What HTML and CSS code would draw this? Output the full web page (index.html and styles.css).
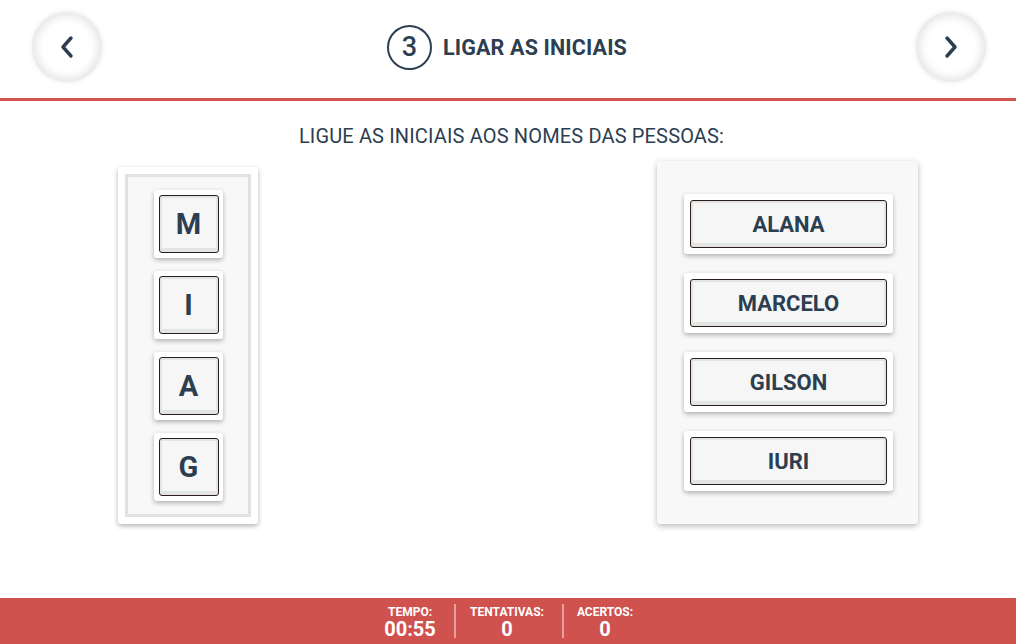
FILE: index.html
```html
<!DOCTYPE html>
<html lang="pt">
<head>
<meta charset="utf-8">
<title>Ligar as iniciais</title>
<link rel="stylesheet" href="styles.css">
</head>
<body>
<div class="app">
  <header class="topbar">
    <button class="nav-btn" aria-label="Anterior">
      <svg width="16" height="24" viewBox="0 0 16 24"><path d="M12 3 L4 12 L12 21" fill="none" stroke="#2c3e50" stroke-width="3.4" stroke-linecap="round" stroke-linejoin="round"/></svg>
    </button>
    <div class="title">
      <span class="step">3</span>
      <span class="title-text">LIGAR AS INICIAIS</span>
    </div>
    <button class="nav-btn" aria-label="Próximo">
      <svg width="16" height="24" viewBox="0 0 16 24"><path d="M4 3 L12 12 L4 21" fill="none" stroke="#2c3e50" stroke-width="3.4" stroke-linecap="round" stroke-linejoin="round"/></svg>
    </button>
  </header>

  <main class="content">
    <p class="instruction">LIGUE AS INICIAIS AOS NOMES DAS PESSOAS:</p>
    <div class="board">
      <div class="panel-left">
        <div class="letters">
          <div class="card letter"><div class="card-inner">M</div></div>
          <div class="card letter"><div class="card-inner">I</div></div>
          <div class="card letter"><div class="card-inner">A</div></div>
          <div class="card letter"><div class="card-inner">G</div></div>
        </div>
      </div>
      <div class="panel-right">
        <div class="card name"><div class="card-inner">ALANA</div></div>
        <div class="card name"><div class="card-inner">MARCELO</div></div>
        <div class="card name"><div class="card-inner">GILSON</div></div>
        <div class="card name"><div class="card-inner">IURI</div></div>
      </div>
    </div>
  </main>

  <footer class="statusbar">
    <div class="stat stat-time"><span class="stat-label">TEMPO:</span><span class="stat-value">00:55</span></div>
    <div class="divider"></div>
    <div class="stat stat-tries"><span class="stat-label">TENTATIVAS:</span><span class="stat-value">0</span></div>
    <div class="divider"></div>
    <div class="stat stat-hits"><span class="stat-label">ACERTOS:</span><span class="stat-value">0</span></div>
  </footer>
</div>
</body>
</html>
```

FILE: styles.css
```css
* { box-sizing: border-box; }

html, body {
  margin: 0;
  padding: 0;
  background: #ffffff;
  font-family: Roboto, "Liberation Sans", Arial, sans-serif;
  color: #2c3e50;
}

.app {
  width: 1016px;
  height: 644px;
  display: flex;
  flex-direction: column;
  overflow: hidden;
}

/* Header */
.topbar {
  height: 101px;
  flex: 0 0 101px;
  border-bottom: 3px solid #d4534f;
  display: flex;
  align-items: center;
  justify-content: space-between;
  padding: 0 30px 4px 32px;
}

.nav-btn {
  width: 70px;
  height: 70px;
  border-radius: 50%;
  border: none;
  background: #ffffff;
  padding: 0;
  display: flex;
  align-items: center;
  justify-content: center;
  box-shadow: inset 0 0 8px 4px rgba(0, 0, 0, 0.1), 0 0 4px 1px rgba(0, 0, 0, 0.07);
  cursor: pointer;
}

.title {
  display: flex;
  align-items: center;
  gap: 11px;
  margin-left: -4px;
}

.step {
  width: 45px;
  height: 45px;
  border-radius: 50%;
  border: 2px solid #2c3e50;
  display: flex;
  align-items: center;
  justify-content: center;
  font-size: 27px;
  font-weight: 500;
}

.title-text {
  font-size: 21.5px;
  font-weight: 700;
  letter-spacing: 0.15px;
}

/* Content */
.content {
  flex: 1;
}

.instruction {
  margin: 24px 0 0;
  padding-left: 7px;
  text-align: center;
  font-size: 20px;
  line-height: 22px;
  letter-spacing: 0.15px;
}

.board {
  display: flex;
  justify-content: space-between;
  align-items: flex-start;
  padding: 0 98px 0 118px;
  margin-top: 14px;
}

.panel-left {
  margin-top: 6px;
  width: 140px;
  height: 357px;
  background: #ffffff;
  border-radius: 3px;
  box-shadow: 0 2px 5px rgba(0, 0, 0, 0.3);
  padding: 7px;
}

.letters {
  height: 100%;
  background: #f8f8f8;
  border: 3px solid #e2e2e2;
  display: flex;
  flex-direction: column;
  align-items: center;
  gap: 13px;
  padding-top: 13px;
}

.panel-right {
  width: 261px;
  height: 363px;
  background: #f8f8f8;
  border-radius: 3px;
  box-shadow: 0 2px 6px rgba(0, 0, 0, 0.28);
  padding: 33px 25px 0 27px;
  display: flex;
  flex-direction: column;
  gap: 19px;
}

.card {
  background: #ffffff;
  border-radius: 3px;
  box-shadow: 0 2px 5px rgba(0, 0, 0, 0.3);
}

.card-inner {
  width: 100%;
  height: 100%;
  border: 1px solid #2a1d17;
  border-radius: 3px;
  background: #f6f6f6;
  box-shadow: inset 0 0 0 2px #e3e5e5, inset 0 -4px 0 #e3e5e5;
  display: flex;
  align-items: center;
  justify-content: center;
  font-weight: 700;
  color: #2c3e50;
}

.letter {
  width: 69px;
  height: 68px;
  padding: 5px 4px 5px 5px;
}

.letter .card-inner {
  font-size: 29px;
  padding-bottom: 1px;
}

.name {
  width: 209px;
  height: 60px;
  padding: 6px;
}

.name .card-inner {
  font-size: 22px;
}

/* Footer */
.statusbar {
  height: 46px;
  flex: 0 0 46px;
  background: #d0524f;
  color: #ffffff;
  display: flex;
  justify-content: flex-start;
  align-items: center;
  padding-left: 366px;
}

.stat {
  display: flex;
  flex-direction: column;
  align-items: center;
  font-weight: 700;
}

.stat-time { width: 88px; }
.stat-tries { width: 106px; padding-right: 4px; }
.stat-hits { width: 84px; padding-right: 2px; }

.stat-label {
  font-size: 12px;
  line-height: 13px;
  margin-top: 2px;
}

.stat-value {
  font-size: 20px;
  line-height: 20px;
}

.divider {
  width: 2px;
  height: 34px;
  background: rgba(255, 255, 255, 0.45);
}
```
